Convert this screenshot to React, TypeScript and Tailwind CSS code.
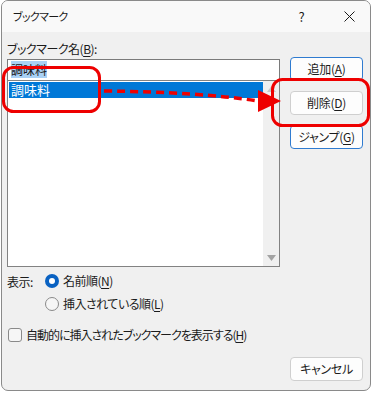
import type { ReactNode } from 'react';

const font = "font-['Noto_Sans_CJK_JP','Noto_Sans',sans-serif] [font-feature-settings:'palt']";

function Key({ children }: { children: ReactNode }) {
  return <span className="underline underline-offset-2">{children}</span>;
}

function DialogButton({ children, accent }: { children: ReactNode; accent?: boolean }) {
  return (
    <button
      className={
        'flex h-[24px] w-[73px] items-center justify-center rounded-[4px] border bg-[#fdfdfd] text-[12px] tracking-[-0.3px] text-[#1b1b1b] ' +
        (accent ? 'border-[#2f7bd0]' : 'border-[#cfcfcf]')
      }
    >
      <span>{children}</span>
    </button>
  );
}

function Annotations() {
  return (
    <svg className="pointer-events-none absolute left-0 top-0" width="373" height="393">
      <rect x="3.5" y="67.5" width="96" height="44" rx="10" fill="none" stroke="#ee0000" strokeWidth="3" />
      <rect x="272.5" y="79.5" width="96" height="46" rx="10" fill="none" stroke="#ee0000" strokeWidth="3" />
      <path d="M104 91 Q 200 92 258 101" fill="none" stroke="#ee0000" strokeWidth="3.5" strokeDasharray="8 5" />
      <polygon points="258,90 281,101 258,112" fill="#ee0000" />
    </svg>
  );
}

export default function App() {
  return (
    <div className={'relative h-[393px] w-[373px] bg-white ' + font}>
      <div className="ml-px flex h-[391px] w-[370px] flex-col overflow-hidden rounded-[7px] border border-[#8a8a8a] bg-[#f0f0f0]">
        <div className="flex h-[31px] items-center bg-[#f9f9f9] pl-[11px] text-[11px] tracking-[-0.7px] text-[#1b1b1b]">
          <span className="flex-1">ブックマーク</span>
          <span className="mr-[40px] text-[13px]">?</span>
          <svg width="11" height="11" viewBox="0 0 11 11" className="mr-[15px]">
            <path d="M0.5 0.5 L10.5 10.5 M10.5 0.5 L0.5 10.5" stroke="#1b1b1b" strokeWidth="1" />
          </svg>
        </div>

        <div className="flex flex-1 flex-col px-[5px] pt-[7px] text-[12px] tracking-[-0.5px] text-[#1b1b1b]">
          <div className="flex gap-[10px]">
            <div className="flex w-[273px] flex-col">
              <div className="h-[20px] leading-[20px]">
                ブックマーク名(<Key>B</Key>):
              </div>
              <div className="h-[21px] border border-[#7a7a7a] border-b-0 bg-white px-[3px] pt-[1px] tracking-normal">
                <span className="bg-[#a9d1f5] leading-[16px]">調味料</span>
              </div>
              <div className="flex h-[187px] border border-[#828282] bg-white">
                <div className="flex-1 pl-px pt-px">
                  <div className="flex h-[16px] items-center bg-[#0078d7] pl-[2px] text-[13px] tracking-normal text-white">調味料</div>
                </div>
                <div className="flex w-[16px] flex-col items-center justify-between bg-[#f0f0f0] py-[5px]">
                  <svg width="9" height="6" viewBox="0 0 9 6">
                    <polygon points="0,6 9,6 4.5,0" fill="#c8c8c8" />
                  </svg>
                  <svg width="9" height="6" viewBox="0 0 9 6">
                    <polygon points="0,0 9,0 4.5,6" fill="#a3a3a3" />
                  </svg>
                </div>
              </div>
            </div>
            <div className="flex flex-col gap-[10px] pt-[18px]">
              <DialogButton accent>
                追加(<Key>A</Key>)
              </DialogButton>
              <DialogButton>
                削除(<Key>D</Key>)
              </DialogButton>
              <DialogButton accent>
                ジャンプ(<Key>G</Key>)
              </DialogButton>
            </div>
          </div>

          <div className="mt-[5px] flex">
            <div className="w-[38px] pt-[1px]">表示:</div>
            <div className="flex flex-col gap-[5px]">
              <label className="flex h-[18px] items-center gap-[4px]">
                <span className="flex h-[14px] w-[14px] items-center justify-center rounded-full bg-[#0a62c2]">
                  <span className="h-[6px] w-[6px] rounded-full bg-white" />
                </span>
                <span>
                  名前順(<Key>N</Key>)
                </span>
              </label>
              <label className="flex h-[18px] items-center gap-[4px]">
                <span className="h-[14px] w-[14px] rounded-full border border-[#8a8a8a] bg-[#f6f6f6]" />
                <span>
                  挿入されている順(<Key>L</Key>)
                </span>
              </label>
            </div>
          </div>

          <label className="mt-[13px] flex h-[18px] items-center gap-[4px]">
            <span className="ml-px h-[14px] w-[14px] rounded-[3px] border border-[#8a8a8a] bg-[#f6f6f6]" />
            <span className="tracking-[-1px]">
              自動的に挿入されたブックマークを表示する(<Key>H</Key>)
            </span>
          </label>

          <div className="mt-[13px] flex justify-end pr-[2px]">
            <DialogButton>キャンセル</DialogButton>
          </div>
        </div>
      </div>
      <Annotations />
    </div>
  );
}
